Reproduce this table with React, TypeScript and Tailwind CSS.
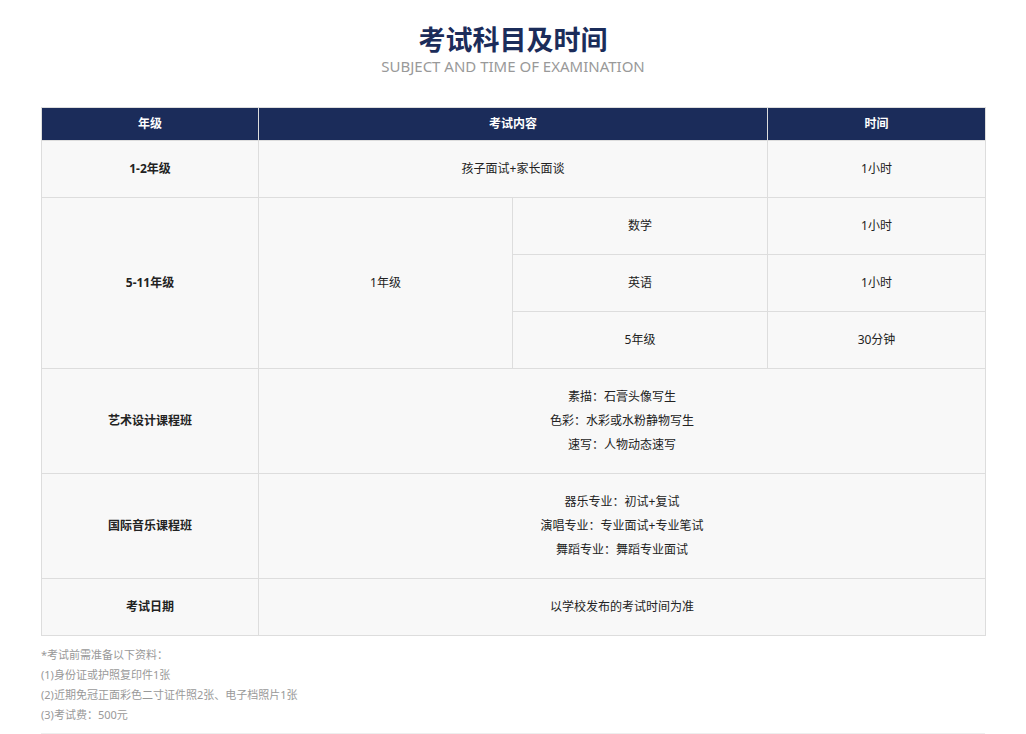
import React from 'react';

const font = { fontFamily: '"Noto Sans", "Noto Sans CJK SC", sans-serif' };

const cell = 'border border-[#dddddd] bg-[#f8f8f8] text-center align-middle text-[12px] text-[#222]';
const head = 'border border-[#dddddd] bg-[#1b2c5a] text-center align-middle text-[12px] font-bold text-white';

export default function App() {
  return (
    <div className="min-h-[734px] bg-white" style={font}>
      <div className="mx-auto w-[944px] border-b border-[#eeeeee] pb-[8px]">
        <div className="flex flex-col items-center pt-[22px]">
          <h1 className="text-[27px] leading-[36px] font-bold text-[#1b2c5a]">考试科目及时间</h1>
          <p className="text-[15px] leading-[16px] text-[#999] font-normal">SUBJECT AND TIME OF EXAMINATION</p>
        </div>

        <table className="mt-[33px] w-full border-collapse table-fixed">
          <colgroup>
            <col className="w-[217px]" />
            <col className="w-[254px]" />
            <col className="w-[255px]" />
            <col className="w-[218px]" />
          </colgroup>
          <tbody>
            <tr className="h-[33px]">
              <th className={head}>年级</th>
              <th className={head} colSpan={2}>考试内容</th>
              <th className={head}>时间</th>
            </tr>
            <tr className="h-[57px]">
              <td className={`${cell} font-bold`}>1-2年级</td>
              <td className={cell} colSpan={2}>孩子面试+家长面谈</td>
              <td className={cell}>1小时</td>
            </tr>
            <tr className="h-[57px]">
              <td className={`${cell} font-bold`} rowSpan={3}>5-11年级</td>
              <td className={cell} rowSpan={3}>1年级</td>
              <td className={cell}>数学</td>
              <td className={cell}>1小时</td>
            </tr>
            <tr className="h-[57px]">
              <td className={cell}>英语</td>
              <td className={cell}>1小时</td>
            </tr>
            <tr className="h-[57px]">
              <td className={cell}>5年级</td>
              <td className={cell}>30分钟</td>
            </tr>
            <tr className="h-[105px]">
              <td className={`${cell} font-bold`}>艺术设计课程班</td>
              <td className={`${cell} leading-[24px]`} colSpan={3}>
                <div>素描：石膏头像写生</div>
                <div>色彩：水彩或水粉静物写生</div>
                <div>速写：人物动态速写</div>
              </td>
            </tr>
            <tr className="h-[105px]">
              <td className={`${cell} font-bold`}>国际音乐课程班</td>
              <td className={`${cell} leading-[24px]`} colSpan={3}>
                <div>器乐专业：初试+复试</div>
                <div>演唱专业：专业面试+专业笔试</div>
                <div>舞蹈专业：舞蹈专业面试</div>
              </td>
            </tr>
            <tr className="h-[57px]">
              <td className={`${cell} font-bold`}>考试日期</td>
              <td className={cell} colSpan={3}>以学校发布的考试时间为准</td>
            </tr>
          </tbody>
        </table>

        <div className="mt-[9px] text-[11px] leading-[20px] text-[#999]">
          <p>*考试前需准备以下资料：</p>
          <p>(1)身份证或护照复印件1张</p>
          <p>(2)近期免冠正面彩色二寸证件照2张、电子档照片1张</p>
          <p>(3)考试费：500元</p>
        </div>
      </div>
    </div>
  );
}
